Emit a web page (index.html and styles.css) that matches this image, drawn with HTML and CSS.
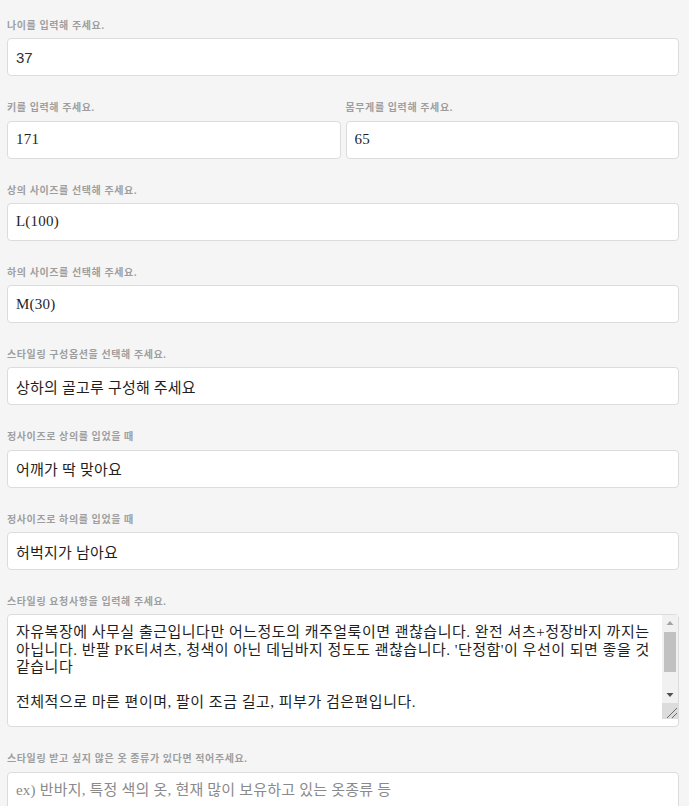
FILE: index.html
```html
<!DOCTYPE html>
<html lang="ko">
<head>
<meta charset="utf-8">
<title>스타일링 정보 입력</title>
<link rel="stylesheet" href="styles.css">
</head>
<body>
<form class="form">
  <div class="field">
    <label class="label">나이를 입력해 주세요.</label>
    <input class="input input-sans" type="text" value="37">
  </div>
  <div class="row">
    <div class="field">
      <label class="label">키를 입력해 주세요.</label>
      <input class="input" type="text" value="171">
    </div>
    <div class="field">
      <label class="label">몸무게를 입력해 주세요.</label>
      <input class="input" type="text" value="65">
    </div>
  </div>
  <div class="field">
    <label class="label">상의 사이즈를 선택해 주세요.</label>
    <input class="input" type="text" value="L(100)">
  </div>
  <div class="field">
    <label class="label">하의 사이즈를 선택해 주세요.</label>
    <input class="input" type="text" value="M(30)">
  </div>
  <div class="field">
    <label class="label">스타일링 구성옵션을 선택해 주세요.</label>
    <input class="input" type="text" value="상하의 골고루 구성해 주세요">
  </div>
  <div class="field">
    <label class="label">정사이즈로 상의를 입었을 때</label>
    <input class="input" type="text" value="어깨가 딱 맞아요">
  </div>
  <div class="field">
    <label class="label">정사이즈로 하의를 입었을 때</label>
    <input class="input" type="text" value="허벅지가 남아요">
  </div>
  <div class="field">
    <label class="label">스타일링 요청사항을 입력해 주세요.</label>
    <div class="area">
      <textarea class="area-text">자유복장에 사무실 출근입니다만 어느정도의 캐주얼룩이면 괜찮습니다. 완전 셔츠+정장바지 까지는 아닙니다. 반팔 PK티셔츠, 청색이 아닌 데님바지 정도도 괜찮습니다. '단정함'이 우선이 되면 좋을 것 같습니다

전체적으로 마른 편이며, 팔이 조금 길고, 피부가 검은편입니다.


</textarea>
      <div class="sb">
        <div class="sb-btn">
          <svg width="16" height="16" viewBox="0 0 16 16"><path d="M4.5 10 L11.5 10 L8 6 Z" fill="#a3a3a3"/></svg>
        </div>
        <div class="sb-track">
          <div class="sb-thumb"></div>
        </div>
        <div class="sb-btn">
          <svg width="16" height="16" viewBox="0 0 16 16"><path d="M4.5 6 L11.5 6 L8 10 Z" fill="#505050"/></svg>
        </div>
        <div class="sb-corner">
          <svg width="16" height="16" viewBox="0 0 16 16"><path d="M15 5 L5 15 M15 10 L10 15" stroke="#6b6b6b" stroke-width="1"/></svg>
        </div>
      </div>
    </div>
  </div>
  <div class="field">
    <label class="label">스타일링 받고 싶지 않은 옷 종류가 있다면 적어주세요.</label>
    <input class="input" type="text" placeholder="ex) 반바지, 특정 색의 옷, 현재 많이 보유하고 있는 옷종류 등">
  </div>
</form>
</body>
</html>
```

FILE: styles.css
```css
html, body {
  margin: 0;
  padding: 0;
  background: #f5f5f5;
}

.form {
  display: flex;
  flex-direction: column;
  gap: 25px;
  padding: 19px 10px 20px 7px;
  font-family: "Liberation Serif", "Noto Sans CJK KR", serif;
}

.row {
  display: grid;
  grid-template-columns: 1fr 1fr;
  column-gap: 5px;
}

.field {
  display: flex;
  flex-direction: column;
}

.label {
  display: block;
  font-size: 10px;
  line-height: 14px;
  margin-bottom: 5.3px;
  color: #9e9e9e;
  font-weight: 700;
  letter-spacing: 0.6px;
  font-family: "Liberation Serif", "Noto Sans CJK KR", serif;
}

.input {
  box-sizing: border-box;
  width: 100%;
  height: 38px;
  margin: 0;
  padding: 0 8px;
  border: 1px solid #dcdcdc;
  border-radius: 4px;
  background: #fff;
  font-family: "Liberation Serif", "Noto Sans CJK KR", serif;
  font-size: 15px;
  letter-spacing: 0.2px;
  color: #1f1f1f;
  outline: none;
}

.input-sans {
  font-family: "Liberation Sans", "Noto Sans CJK KR", sans-serif;
  color: #333;
  letter-spacing: 0;
}

.input::placeholder {
  color: #8a8a8a;
}

.area {
  position: relative;
  box-sizing: border-box;
  height: 113px;
  border: 1px solid #dcdcdc;
  border-radius: 4px;
  background: #fff;
}

.area-text {
  display: block;
  box-sizing: border-box;
  width: 100%;
  height: 100%;
  margin: 0;
  padding: 9px 22px 8px 8px;
  border: 0;
  background: transparent;
  resize: none;
  overflow: hidden;
  outline: none;
  font-family: "Liberation Serif", "Noto Sans CJK KR", serif;
  font-size: 15px;
  line-height: 17.5px;
  letter-spacing: 0.5px;
  word-break: keep-all;
  color: #1f1f1f;
}

.sb {
  position: absolute;
  top: 0;
  right: 0;
  width: 16px;
  height: 104px;
  display: flex;
  flex-direction: column;
  background: #f1f1f1;
}

.sb-btn {
  height: 16px;
  flex: none;
}

.sb-btn svg, .sb-corner svg {
  display: block;
}

.sb-track {
  flex: 1;
  padding: 1px 2px;
  display: flex;
  flex-direction: column;
}

.sb-thumb {
  height: 40px;
  background: #c1c1c1;
}

.sb-corner {
  height: 16px;
  flex: none;
  background: #dcdcdc;
}
```
